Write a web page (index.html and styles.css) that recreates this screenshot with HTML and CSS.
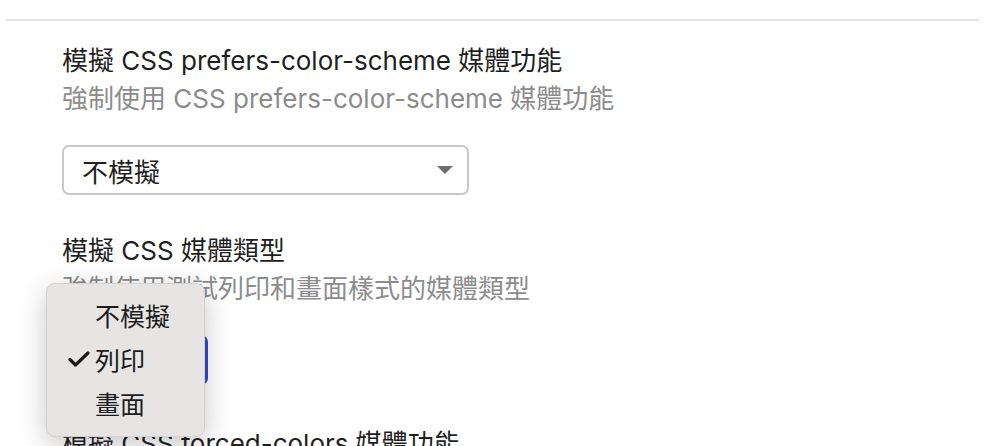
FILE: index.html
```html
<!DOCTYPE html>
<html>
    <head>
        <meta charset="utf-8">
        <link rel="stylesheet" href="styles.css">
    </head>
    <body>
        <div class="divider"></div>

        <div class="setting">
            <p class="title">模擬 CSS prefers-color-scheme 媒體功能</p>
            <p class="hint">強制使用 CSS prefers-color-scheme 媒體功能</p>
            <div class="select wide">
                <span>不模擬</span>
                <svg class="arrow" width="16" height="8" viewBox="0 0 16 8"><path d="M0 0 L16 0 L8 8 Z" fill="#6f6f6f"/></svg>
            </div>
        </div>

        <div class="setting">
            <p class="title">模擬 CSS 媒體類型</p>
            <p class="hint">強制使用測試列印和畫面樣式的媒體類型</p>
            <div class="select active"></div>

            <div class="menu">
                <div class="item"><span class="check"></span>不模擬</div>
                <div class="item"><span class="check">
                    <svg width="22" height="16" viewBox="0 0 22 16"><path d="M2 8.5 L7.5 14 L20 2" fill="none" stroke="#1a1a1a" stroke-width="3.2" stroke-linecap="round" stroke-linejoin="round"/></svg>
                </span>列印</div>
                <div class="item"><span class="check"></span>畫面</div>
            </div>
        </div>

        <div class="setting last">
            <p class="title">模擬 CSS forced-colors 媒體功能</p>
        </div>
    </body>
</html>
```

FILE: styles.css
```css
body{
    margin: 0;
    padding-top: 19px;
    background: white;
    font-family: "Inter", "Noto Sans CJK TC", sans-serif;
    color: #1f1f1f;
    overflow: hidden;
}
.divider{
    height: 2px;
    margin-left: 6px;
    margin-right: 27px;
    background: #e3e3e3;
}

.setting{
    position: relative;
    padding-left: 62px;
    margin-top: 21px;
}
.setting + .setting{
    margin-top: 37px;
}
.setting.last{
    margin-top: 40px;
}
.title, .hint{
    margin: 0;
    font-size: 26px;
    line-height: 38px;
    white-space: nowrap;
}
.hint{
    color: #8c8c8c;
}

.select{
    box-sizing: border-box;
    height: 50px;
    margin-top: 27px;
    border: solid 2px #c8c8c8;
    border-radius: 7px;
    display: flex;
    align-items: center;
    justify-content: space-between;
    padding: 0 14px 0 18px;
    font-size: 26px;
}
.wide{
    width: 407px;
}
.active{
    width: 146px;
    height: 50px;
    border: none;
    background: #2c50c6;
}

.menu{
    position: absolute;
    left: 46px;
    top: 51px;
    width: 157px;
    padding: 9px 0 11px 0;
    background: #e6e5e4;
    border-radius: 9px;
    border: solid 1px #d2d1d0;
    box-shadow: 0px 8px 28px 0px rgba(0, 0, 0, 0.22);
    z-index: 10;
}
.item{
    display: flex;
    align-items: center;
    height: 44px;
    font-size: 25px;
    color: #1c1c1c;
}
.check{
    width: 48px;
    display: flex;
    justify-content: flex-end;
    box-sizing: border-box;
    padding-right: 5px;
}
```
